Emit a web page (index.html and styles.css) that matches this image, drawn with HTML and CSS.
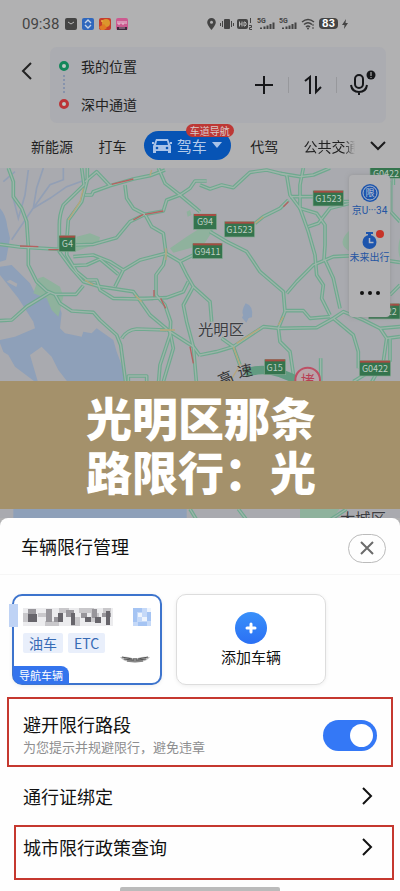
FILE: index.html
```html
<!DOCTYPE html>
<html lang="zh-CN">
<head>
    <meta charset="UTF-8">
    <meta name="viewport" content="width=device-width, initial-scale=1.0">
    <title>车辆限行管理</title>
    <link rel="stylesheet" href="styles.css">
</head>
<body>

<div class="status-bar">
    <span class="clock">09:38</span>
    <div class="status-apps">
        <svg width="12" height="12" viewBox="0 0 12 12"><rect width="12" height="12" rx="2" fill="#444"/><path d="M3 4l3 2 3-2" fill="none" stroke="#bbb"/></svg>
        <svg width="12" height="12" viewBox="0 0 12 12"><rect width="12" height="12" rx="2" fill="#2f67bd"/><path d="M3 5l3-3 3 3M3 7l3 3 3-3" fill="none" stroke="#c5d4e8" stroke-width="1.4"/></svg>
        <svg width="12" height="12" viewBox="0 0 12 12"><rect width="12" height="12" rx="2" fill="#c63c2c"/><circle cx="7" cy="5" r="4" fill="#dc962c"/><path d="M0 9l5-3 3 4-3 2H2z" fill="#e07b24"/><circle cx="3" cy="3" r="1" fill="#e8b34a"/></svg>
        <svg width="12" height="12" viewBox="0 0 12 12"><rect width="12" height="12" rx="2" fill="#cc5a90"/><path d="M2 3v3h2V3M6 3v3h2V3M10 3v3" fill="none" stroke="#e6cbd8"/><path d="M1 9h10v3H1z" fill="#3d2a3c"/><path d="M3 10h6" stroke="#b88aa4"/></svg>
    </div>
    <div class="status-icons">
        <svg width="9" height="12" viewBox="0 0 9 12"><path d="M4.500 0a4.300 4.300 0 0 1 4.300 4.300C8.800 7.500 4.500 12 4.500 12S.2 7.500.2 4.300A4.300 4.300 0 0 1 4.500 0z" fill="#444"/><circle cx="4.500" cy="4.300" r="1.500" fill="#b1b1b2"/></svg>
        <svg width="14" height="12" viewBox="0 0 14 12"><rect x="4" y="1" width="6" height="10" rx="1" fill="#444"/><path d="M2.500 3v6M.5 5v3M11.500 3v6M13.500 5v3" stroke="#444"/></svg>
        <svg class="hd" width="16" height="12" viewBox="0 0 16 12"><rect y="1" width="11" height="10" rx="2" fill="#444"/><path d="M2.500 3.500v5M5 3.500v5M2.500 6H5M7 4h1l1 1v2L8 8H7z" fill="none" stroke="#bbb"/><path d="M13.500 0v5M12 7.500h2.500v2h-2V11.500H15" fill="none" stroke="#444"/></svg>
        <svg class="signal" width="18" height="12" viewBox="0 0 18 12"><text x="0" y="5">5G</text><path d="M4 9.500V11M7.500 8.500V11M10.500 7.500V11M13.500 6V11M16.500 4.500V11" stroke="#444" stroke-width="2"/></svg>
        <svg class="signal" width="18" height="12" viewBox="0 0 18 12"><text x="0" y="5">5G</text><path d="M4 9.500V11M7.500 8.500V11M10.500 7.500V11M13.500 6V11M16.500 4.500V11" stroke="#444" stroke-width="2"/></svg>
        <svg width="14" height="12" viewBox="0 0 14 12"><path d="M1 4Q7-1 13 4M3 6.500Q7 3 11 6.500M5 9Q7 7 9 9" fill="none" stroke="#444" stroke-width="1.500"/><circle cx="7" cy="10.500" r="1" fill="#444"/><path d="M12 6v5" stroke="#444" stroke-dasharray="2 1"/></svg>
        <span class="battery">83</span>
        <svg width="6" height="12" viewBox="0 0 6 12"><path d="M4 1L0 7h2.500L2 11l4-6H3.500z" fill="#444"/></svg>
    </div>
</div>

<header class="search">
    <button class="icon-btn back" aria-label="返回">
        <svg width="12" height="18" viewBox="0 0 12 18"><path d="M10 1L2 9l8 8" fill="none" stroke="#222" stroke-width="2"/></svg>
    </button>
    <div class="search-card">
        <div class="places">
            <div class="place"><span class="dot start"></span>我的位置</div>
            <div class="place"><span class="dot end"></span>深中通道</div>
        </div>
        <div class="search-actions">
            <button class="icon-btn" aria-label="添加途经点">
                <svg width="20" height="20" viewBox="0 0 20 20"><path d="M10 1v18M1 10h18" stroke="#16171a" stroke-width="2"/></svg>
            </button>
            <button class="icon-btn" aria-label="交换起终点">
                <svg width="18" height="20" viewBox="0 0 18 20"><path d="M1 6l5-4v17M12 1v16l5-5" fill="none" stroke="#16171a" stroke-width="2"/></svg>
            </button>
            <button class="icon-btn voice" aria-label="语音">
                <svg width="26" height="26" viewBox="0 0 26 26"><rect x="5" y="5" width="8" height="13" rx="4" fill="none" stroke="#16171a" stroke-width="2"/><path d="M1 15q1 7 8 7t8-7M9 22v3" fill="none" stroke="#16171a" stroke-width="2"/><circle cx="21" cy="5" r="4.500" fill="#16171a"/><path d="M21 2v4M21 7v1" stroke="#aaa" stroke-width="1.200"/></svg>
            </button>
        </div>
    </div>
</header>

<nav class="tabs">
    <a href="#">新能源</a>
    <a href="#">打车</a>
    <a href="#" class="active">
        <svg width="20" height="16" viewBox="0 0 20 16"><path d="M4 1h12l2 5 1 2v7h-3v-2H4v2H1V8l1-2zM5 3L4 7h12l-1-4z" fill="#a9c3e8" fill-rule="evenodd"/><path d="M0 5h2M18 5h2" stroke="#a9c3e8" stroke-width="2"/><circle cx="5" cy="10" r="1.300" fill="#0754b5"/><circle cx="15" cy="10" r="1.300" fill="#0754b5"/></svg>
        驾车
        <svg width="10" height="7" viewBox="0 0 10 7"><path d="M0 0h10L5 6z" fill="#a9c3e8"/></svg>
        <span class="tag">车道导航</span>
    </a>
    <a href="#">代驾</a>
    <a href="#" class="cut">公共交通</a>
    <button class="icon-btn" aria-label="更多方式">
        <svg width="16" height="10" viewBox="0 0 16 10"><path d="M1 1l7 7 7-7" fill="none" stroke="#1b1b1c" stroke-width="2"/></svg>
    </button>
</nav>

<main class="map">
    <svg class="map-canvas" viewBox="0 9 1200 1056" preserveAspectRatio="xMidYMin slice">
        <!-- water -->
        <g class="water">
            <path d="M0 130q18 20 22 55l8 35-12 65L0 290z"/>
            <path d="M0 305l35-5 55 55 15 30q40 20 65 10l15 50-5 45 15 15 50 10 5-15 25 5 15-15 50 35 10 35 30 80 180 250v180H40V860l170-200-35-45-20-40-30-30-35 25 25 85-20 15-70-70L0 535v-10l45-10 60-25-5-20-45-70-55-70z"/>
            <path d="M737 415q-15 25-7 35l-4 8 13 15 7-14 10-2q5-35-19-42z"/>
        </g>
        <path class="land" d="M0 555l25 15 20 35 60 45H0zM20 350l10-6 22 12-3 10z"/>
        <g class="river">
            <path d="M130 9l-20 60-10 60-65 95M190 9v35l-40 15-50 70M85 15l-10 75-20 70-15-60M270 40l-70 25-50 35-50 30M10 50l35-30"/>
        </g>
        <g class="park">
            <path d="M115 340l15-5 50 30 10 30-15 60-20-20-15-35-40-15z"/>
            <path d="M230 215l40-10 30 12-5 18-70 25z"/>
            <path d="M510 250l50-35 40-25 25 10-20 40-55 15-30 8zM560 140l10-5 5 15-12 5zM600 195h40l-30 45z"/>
            <path d="M1050 195q-45 40 0 65zM1200 220v60q-10-30 0-60zM900 1030h120l-30 40H900z"/>
        </g>

        <!-- roads: wide green casing with a pale core drawn again on top -->
        <defs>
            <g id="roads">
                <path d="M25 9L40 50V95L65 130 80 170 85 245V300L110 350 140 378 165 388H228L250 362"/>
                <path d="M0 467L35 465 80 425 150 382M165 388L180 415 215 438 280 442 300 465 350 510 362 540 378 660"/>
                <path d="M245 9L252 60 190 120Q178 150 178 180V260L215 310 250 350 300 365 400 380 415 400H460"/>
                <path d="M262 9V45L245 110 205 165 200 230V270L230 320 260 345H290L300 375 340 400 420 402 500 398 550 380 565 350"/>
                <path d="M0 238L60 246 180 253M225 240L280 238 350 218 390 170 435 148 490 138 500 105 540 90 570 70 585 48H620"/>
                <path d="M375 60L380 100 400 130 435 148 455 185 490 205 498 265 490 300 468 330V390L495 420 512 470 510 510 480 600 475 660"/>
                <path d="M475 9L495 55 540 90 600 140M255 90H275L280 80 330 62 400 42 450 32 495 15M255 50L290 20 330 62"/>
                <path d="M220 275L280 270 330 290 370 315 420 285 498 265 540 290 600 260M220 302L260 300 300 282 355 328M370 315L345 365"/>
                <path d="M415 400L450 450 510 500 580 545 600 572M365 520Q380 495 410 492L500 495M510 500L520 550 490 650"/>
                <path d="M540 290L560 330 580 365 550 420 560 470 580 545 590 660M385 660V633H440V660"/>
                <path d="M600 60L630 72 665 60 700 68 750 22 800 15 860 30 870 90 900 130 950 145 975 180V240L972 285"/>
                <path d="M910 9L900 60V130L925 200 945 270 950 330 970 360 965 400 990 450M840 25L900 35 940 30 990 9"/>
                <path d="M865 105L840 130 790 155 765 175M630 200L680 230 740 260 780 320 850 380 855 440 835 490 840 530 870 560 885 660"/>
                <path d="M860 385L890 350 940 300 1000 275 1060 272 1200 292M975 285L1000 340 1020 430"/>
                <path d="M600 570L650 560 700 545 790 485 840 490 950 488 1000 460 1030 440 1090 465 1140 490 1200 485"/>
                <path d="M855 437H910L930 460 990 455M870 95H940M1030 110H1060M925 185L955 175 990 130 1050 115"/>
                <path d="M1000 460L1060 510 1075 560V610M580 365L630 410 635 470M665 520L700 545 720 600M962 580V660M1140 490L1160 520 1150 590 1110 660"/>
                <path d="M1200 515L1160 520M1170 520V590M1200 360L1170 390M1172 50V140L1200 170M1180 9V60M1060 650L1100 625"/>
                <path d="M570 1032L590 1065M715 1032L740 1065M990 1065L1040 1032"/>
            </g>
        </defs>
        <use href="#roads" class="casing"/>
        <use href="#roads" class="core"/>
        <path class="expressway" d="M735 625Q810 595 905 655"/>
        <g class="slow">
            <path d="M250 70L240 110 205 165M450 32L455 15M498 250V285M255 345L280 360M405 390L425 410M480 495H525M765 175L790 155M835 480L850 455M700 545L720 600 690 650M780 490L710 535"/>
        </g>
        <g class="jam">
            <path d="M335 58L400 42M400 165L430 148M435 148L490 138M60 243L115 245M145 254H180M462 375V395M482 400L497 430M570 545L580 595M850 125L865 110"/>
        </g>

        <!-- road number shields -->
        <g class="shield">
            <rect x="177" y="212" width="50" height="48"/><path d="M179 215h46"/><text x="202" y="247">G4</text>
            <rect x="580" y="147" width="70" height="46"/><path d="M582 150h66"/><text x="615" y="181">G94</text>
            <rect x="577" y="235" width="90" height="46"/><path d="M579 238h86"/><text x="622" y="269">G9411</text>
            <rect x="673" y="170" width="91" height="46"/><path d="M675 173h87"/><text x="718" y="204">G1523</text>
            <rect x="939" y="77" width="92" height="46"/><path d="M941 80h88"/><text x="985" y="111">G1523</text>
            <rect x="1110" y="2" width="92" height="38"/><text x="1158" y="35">G0422</text>
            <rect x="1105" y="416" width="95" height="46"/><path d="M1107 419h91"/><text x="1151" y="450">G0422</text>
            <rect x="793" y="583" width="64" height="46"/><path d="M795 586h60"/><text x="824" y="617">G15</text>
            <rect x="1078" y="587" width="94" height="46"/><path d="M1080 590h90"/><text x="1125" y="621">G0422</text>
        </g>
        <text class="place-name" x="594" y="510">光明区</text>
        <g class="road-name">
            <text transform="rotate(-24 680 640)" x="655" y="655">高</text>
            <text transform="rotate(-12 735 617)" x="712" y="634">速</text>
        </g>
        <circle cx="923" cy="645" r="37" class="jam-ring"/>
        <text class="jam-text" x="923" y="661">堵</text>
        <text class="place-name" x="1020" y="1078">大城区</text>
    </svg>

    <aside class="map-tools">
        <a href="#">
            <svg width="20" height="20" viewBox="0 0 20 20"><circle cx="10" cy="10" r="9" fill="#1d55ad"/><circle cx="10" cy="10" r="7" fill="none" stroke="#b0b8c8"/><text x="10" y="13" class="limit">限</text></svg>
            京U···34
        </a>
        <a href="#" class="trip">
            <svg width="22" height="20" viewBox="0 0 22 20"><path d="M7 3h7" stroke="#1d55ad" stroke-width="2"/><path d="M10.500 3v3" stroke="#1d55ad" stroke-width="3"/><circle cx="10.500" cy="12" r="7" fill="#1d55ad"/><path d="M10.500 8v4.500h4" fill="none" stroke="#b0b8c8" stroke-width="1.500"/><circle cx="21" cy="4" r="4" fill="#c63328"/></svg>
            未来出行
        </a>
        <button class="icon-btn" aria-label="更多">
            <svg width="22" height="6" viewBox="0 0 22 6"><circle cx="3" cy="3" r="2" fill="#111"/><circle cx="11" cy="3" r="2" fill="#111"/><circle cx="19" cy="3" r="2" fill="#111"/></svg>
        </button>
    </aside>

    <h1 class="banner">光明区那条<br>路限行：光</h1>
</main>

<section class="sheet">
    <div class="sheet-head">
        <h2>车辆限行管理</h2>
        <button class="close" aria-label="关闭">
            <svg width="14" height="14" viewBox="0 0 14 14"><path d="M1 1l12 12M13 1L1 13" stroke="#6b6b6b" stroke-width="2"/></svg>
        </button>
    </div>

    <div class="cars">
        <div class="car selected">
            <div class="plate">
                <!-- masked plate number -->
                <svg width="90" height="18" viewBox="0 0 90 18" shape-rendering="crispEdges" role="img" aria-label="车牌已隐藏">
                    <path fill="#ececee" d="M0 0h90v18H0z"/>
                    <path fill="#c9c8cb" d="M0 5h5v9H0zM15 5h10v4H15zM22 13h14v5H22zM36 0h10v5H36zM48 9h9v9H48zM56 0h15v5H56zM68 5h8v9H68zM80 0h8v5h-8z"/>
                    <path fill="#98969b" d="M5 1h8v5H5zM23 1h6v13h-6zM31 9h9v5h-9zM43 2h8v7h-8zM58 5h6v5h-6zM69 1h5v9h-5zM79 5h9v4h-9z"/>
                    <path fill="#67656b" d="M5 6h9v8H5zM35 5h5v9h-5zM48 5h4v12h-4zM62 9h6v5h-6zM72 9h6v6h-6zM83 3h4v14h-4z"/>
                </svg>
                <svg width="18" height="18" viewBox="0 0 18 18" shape-rendering="crispEdges"><path fill="#c5d9f8" d="M0 0h18v18H0z"/><path fill="#a5c4f3" d="M0 0h9v4H4v10H0zM14 4h4v9h-4zM5 14h9v4H5z"/><path fill="#eef4fd" d="M5 5h4v4H5zM9 9h5v4H9zM14 0h4v4h-4z"/></svg>
            </div>
            <div class="chips"><span>油车</span><span>ETC</span></div>
            <svg class="brand" width="30" height="8" viewBox="0 0 30 8"><path d="M0 1q8-1 12 1h6q4-2 12-1-3 4-9 5l-6 1-6-1Q3 5 0 1z" fill="#bbb"/><path d="M2 1l10 2M4 3l8 1M7 5l6 0M28 1L18 3M26 3l-8 1M23 5h-6M13 3h4v2h-4z" fill="none" stroke="#555"/></svg>
            <span class="corner">导航车辆</span>
        </div>
        <button class="car add">
            <svg width="34" height="34" viewBox="0 0 34 34"><defs><linearGradient id="plus" x2="0" y2="1"><stop stop-color="#3990fa"/><stop offset="1" stop-color="#2b70f4"/></linearGradient></defs><circle cx="17" cy="17" r="16" fill="url(#plus)"/><path d="M17 13v8M13 17h8" stroke="#fff" stroke-width="3" stroke-linecap="round"/></svg>
            添加车辆
        </button>
    </div>

    <div class="option marked">
        <label for="avoid">避开限行路段<small>为您提示并规避限行，避免违章</small></label>
        <input type="checkbox" id="avoid" class="switch" checked>
    </div>
    <a href="#" class="option">
        通行证绑定
        <svg width="12" height="18" viewBox="0 0 12 18"><path d="M2 1l8 8-8 8" fill="none" stroke="#111" stroke-width="2"/></svg>
    </a>
    <a href="#" class="option marked policy">
        城市限行政策查询
        <svg width="12" height="18" viewBox="0 0 12 18"><path d="M2 1l8 8-8 8" fill="none" stroke="#111" stroke-width="2"/></svg>
    </a>
    <div class="home-bar"></div>
</section>

</body>
</html>
```
FILE: styles.css
```css
/* general */
* {
    box-sizing: border-box;
}

body {
    margin: 0;
    background-color: #b1b1b2;
    font-family: "Noto Sans CJK SC", sans-serif;
    font-size: 14px;
    color: #222;
}

a {
    color: inherit;
    text-decoration: none;
}

button {
    font-family: inherit;
    cursor: pointer;
}

svg {
    flex-shrink: 0;
}

.icon-btn {
    display: flex;
    padding: 0;
    border: none;
    background: none;
}

/* status bar */
.status-bar {
    display: flex;
    align-items: center;
    height: 47px;
    padding: 0 52px 0 22px;
}

.clock {
    font-family: Roboto, sans-serif;
    font-size: 15px;
    color: #444;
}

.status-apps {
    display: flex;
    gap: 5px;
    margin-left: 6px;
}

.status-icons {
    display: flex;
    align-items: center;
    gap: 4px;
    margin-left: auto;
}

.hd {
    margin-left: -1px;
}

.signal text {
    font: bold 7px Roboto, sans-serif;
    fill: #444;
}

.battery {
    padding: 0 3px;
    border-radius: 4px;
    background-color: #444;
    color: #fff;
    font: bold 10px/11px Inter, sans-serif;
}

/* search */
.search {
    display: flex;
    align-items: center;
    height: 76px;
    padding: 0 14px 0 21px;
}

.back {
    margin: 0 17px 36px 0;
    padding-top: 8px;
}

.search-card {
    display: flex;
    flex: 1;
    align-items: center;
    justify-content: space-between;
    height: 76px;
    padding: 0 10px 0 9px;
    border-radius: 7px;
    background-color: #abacb1;
}

.place {
    display: flex;
    align-items: center;
    gap: 12px;
    height: 38px;
}

.places {
    position: relative;
}

.places::before {
    content: "";
    position: absolute;
    left: 4px;
    top: 28px;
    height: 18px;
    border-left: 2px dotted #8793ac;
}

.dot {
    width: 10px;
    height: 10px;
    border: 3px solid #12875a;
    border-radius: 50%;
    background-color: #bcc8c3;
}

.dot.end {
    border-color: #bb3437;
}

.search-actions {
    display: flex;
    align-items: center;
}

.search-actions .icon-btn + .icon-btn {
    height: 16px;
    align-items: center;
    margin-left: 14px;
    padding-left: 15px;
    border-left: 1px solid #97989c;
}

.search-actions .icon-btn.voice {
    padding: 0 0 4px 13px;
}

/* tabs */
.tabs {
    display: flex;
    align-items: center;
    justify-content: space-between;
    height: 45px;
    padding: 0 14px 0 31px;
}

.tabs .active {
    position: relative;
    display: flex;
    align-items: center;
    gap: 5px;
    height: 29px;
    margin: 0 -6px 0 -8px;
    padding: 0 9px 0 8px;
    border-radius: 15px;
    background-color: #0754b5;
    color: #b4cbea;
    font-size: 15px;
}

.tag {
    position: absolute;
    right: -3px;
    top: -7px;
    padding: 0 4px;
    border-radius: 7px;
    background-color: #bd3835;
    color: #d8c9c9;
    font-size: 10px;
    line-height: 13px;
}

.tabs .cut {
    width: 51px;
    margin-right: -10px;
    overflow: hidden;
    white-space: nowrap;
    -webkit-mask-image: linear-gradient(to right, #000 80%, transparent);
    mask-image: linear-gradient(to right, #000 80%, transparent);
}

/* map */
.map {
    position: relative;
    height: 350px;
    background-color: #a9aaaf;
}

.map-canvas {
    display: block;
    width: 100%;
    height: 100%;
}

.water {
    fill: #8ea0b9;
}

.land {
    fill: #a9aaaf;
}

.river {
    fill: none;
    stroke: #929fb5;
    stroke-width: 5;
}

.park {
    fill: #8fb29d;
}

.casing,
.core,
.slow,
.jam,
.expressway {
    fill: none;
    stroke-linejoin: round;
}

.casing {
    stroke: #6fa98f;
    stroke-width: 11;
}

.core {
    stroke: #9db5aa;
    stroke-width: 4;
}

.expressway {
    stroke: #629b81;
    stroke-width: 26;
}

.slow {
    stroke: #b7a57b;
    stroke-width: 4;
}

.jam {
    stroke: #b66060;
    stroke-width: 4;
}

.shield rect {
    fill: #34744d;
    stroke: #86a893;
    stroke-width: 2;
}

.shield path {
    stroke: #a64c43;
    stroke-width: 6;
}

.shield text {
    fill: #bccdc2;
    font-size: 27px;
    text-anchor: middle;
}

.place-name {
    fill: #3c3d41;
    font-size: 46px;
    stroke: #b2b3b7;
    stroke-width: 3;
    paint-order: stroke;
}

.road-name {
    fill: #333;
    font-size: 45px;
}

.jam-ring {
    fill: #b9a5aa;
    stroke: #bd5065;
    stroke-width: 6;
}

.jam-text {
    fill: #b83e54;
    font-size: 42px;
    text-anchor: middle;
}

.map-tools {
    position: absolute;
    top: 7px;
    right: 10px;
    display: flex;
    flex-direction: column;
    align-items: center;
    width: 41px;
    height: 142px;
    padding-top: 8px;
    border-radius: 4px;
    background-color: #b0b0b2;
    box-shadow: 0 0 4px #8889;
    color: #2455a2;
    font-family: Roboto, "Noto Sans CJK SC", sans-serif;
    font-size: 10px;
    line-height: 16px;
    white-space: nowrap;
}

.map-tools a {
    display: flex;
    flex-direction: column;
    align-items: center;
    height: 47px;
}

.map-tools svg {
    overflow: visible;
}

.map-tools .icon-btn {
    margin-top: 13px;
}

.limit {
    fill: #c0c8d6;
    font-size: 9px;
    text-anchor: middle;
}

.banner {
    position: absolute;
    top: 213px;
    left: 0;
    right: 0;
    margin: 0;
    padding: 8px 0 12px 2px;
    background-color: #a4916b;
    color: #fff;
    font-size: 46px;
    font-weight: 900;
    line-height: 54px;
    text-align: center;
}

/* bottom sheet */
.sheet {
    position: relative;
    border-radius: 8px 8px 0 0;
    background-color: #fefefe;
    color: #111;
}

.sheet-head {
    display: flex;
    align-items: center;
    justify-content: space-between;
    height: 57px;
    padding: 4px 14px 0 21px;
    border-bottom: 1px solid #f6f6f6;
}

.sheet-head h2 {
    margin: 0 0 4px;
    font-size: 18px;
    font-weight: 400;
}

.close {
    display: flex;
    align-items: center;
    justify-content: center;
    width: 38px;
    height: 29px;
    padding: 0;
    border: 1px solid #bbb;
    border-radius: 15px;
    background: none;
}

.cars {
    display: grid;
    grid-template-columns: 150px 150px;
    gap: 14px;
    padding: 19px 12px 12px;
}

.car {
    position: relative;
    height: 91px;
    border: 1px solid #ddd;
    border-radius: 10px;
    background-color: #fff;
    box-shadow: 0 1px 4px #0001;
}

.selected {
    padding: 12px 9px;
    border: 2px solid #3d74cd;
}

.selected::before {
    content: "";
    position: absolute;
    left: -5px;
    top: 8px;
    width: 9px;
    height: 23px;
    background-color: #bfd3f5;
}

.plate {
    display: flex;
    justify-content: space-between;
    height: 25px;
}

.chips {
    display: flex;
    gap: 5px;
}

.chips span {
    padding: 0 6px;
    border-radius: 2px;
    background-color: #e9effb;
    color: #376bb5;
    line-height: 20px;
}

.brand {
    position: absolute;
    right: 10px;
    bottom: 19px;
}

.corner {
    position: absolute;
    left: -1px;
    bottom: -1px;
    padding: 0 6px;
    border-radius: 0 8px 0 8px;
    background-color: #3474ed;
    color: #fff;
    font-size: 11px;
    line-height: 18px;
}

.add {
    display: flex;
    flex-direction: column;
    align-items: center;
    padding: 16px 0 0;
    color: #111;
    font-size: 15px;
    line-height: 24px;
}

.option {
    display: flex;
    align-items: center;
    justify-content: space-between;
    height: 58px;
    padding: 0 27px 0 23px;
    font-size: 18px;
}

.option.marked {
    height: 70px;
    margin: 0 7px;
    padding: 0 14px;
    border: 2px solid #c5382f;
}

.option.marked.policy {
    height: 55px;
    margin: 0 6px 0 14px;
    padding: 0 19px 12px 7px;
}

.option label {
    padding-top: 6px;
    line-height: 24px;
}

.option small {
    display: block;
    color: #8e8e90;
    font-size: 13px;
    line-height: 22px;
}

.switch {
    appearance: none;
    display: flex;
    justify-content: flex-end;
    width: 54px;
    height: 31px;
    margin: 6px 0 0;
    padding: 4px;
    border-radius: 16px;
    background-color: #ccc;
}

.switch:checked {
    background-color: #3478f6;
}

.switch::before {
    content: "";
    width: 23px;
    height: 23px;
    border-radius: 50%;
    background-color: #fff;
}

.home-bar {
    width: 160px;
    height: 4px;
    margin: 7px auto 0;
    border-radius: 2px 2px 0 0;
    background-color: #bbb;
}
```
